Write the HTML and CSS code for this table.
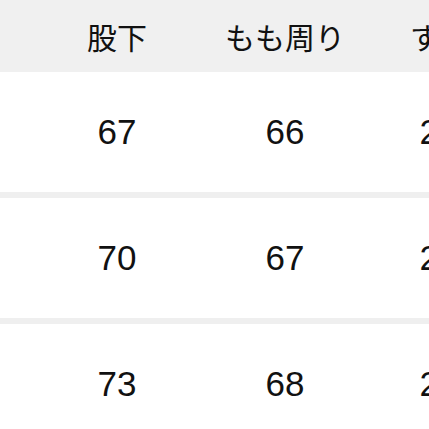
FILE: index.html
```html
<!DOCTYPE html>
<html lang="ja">
<head>
<meta charset="utf-8">
<link rel="stylesheet" href="styles.css">
</head>
<body>
<div class="table">
  <div class="row head">
    <div class="cell">股下</div>
    <div class="cell">もも周り</div>
    <div class="cell last">すそ幅</div>
  </div>
  <div class="row body">
    <div class="cell">67</div>
    <div class="cell">66</div>
    <div class="cell">22</div>
  </div>
  <div class="sep"></div>
  <div class="row body">
    <div class="cell">70</div>
    <div class="cell">67</div>
    <div class="cell">23</div>
  </div>
  <div class="sep"></div>
  <div class="row body">
    <div class="cell">73</div>
    <div class="cell">68</div>
    <div class="cell">24</div>
  </div>
</div>
</body>
</html>
```
FILE: styles.css
```css
html, body {
  margin: 0;
  padding: 0;
  background: #ffffff;
  overflow: hidden;
}
.table {
  width: 429px;
  overflow: hidden;
  font-family: "Liberation Sans", "Noto Sans CJK JP", sans-serif;
  color: #111111;
}
.row {
  display: grid;
  grid-template-columns: 168px 168px 140px;
  padding-left: 33px;
  width: 509px;
  align-items: center;
}
.head {
  height: 72px;
  background: #f0f0f0;
  font-size: 30px;
}
.body {
  height: 120px;
  font-size: 35px;
}
.cell {
  text-align: center;
  white-space: nowrap;
}
.head .last {
  text-align: left;
  padding-left: 41px;
}
.sep {
  height: 6px;
  background: #efefef;
}
```
